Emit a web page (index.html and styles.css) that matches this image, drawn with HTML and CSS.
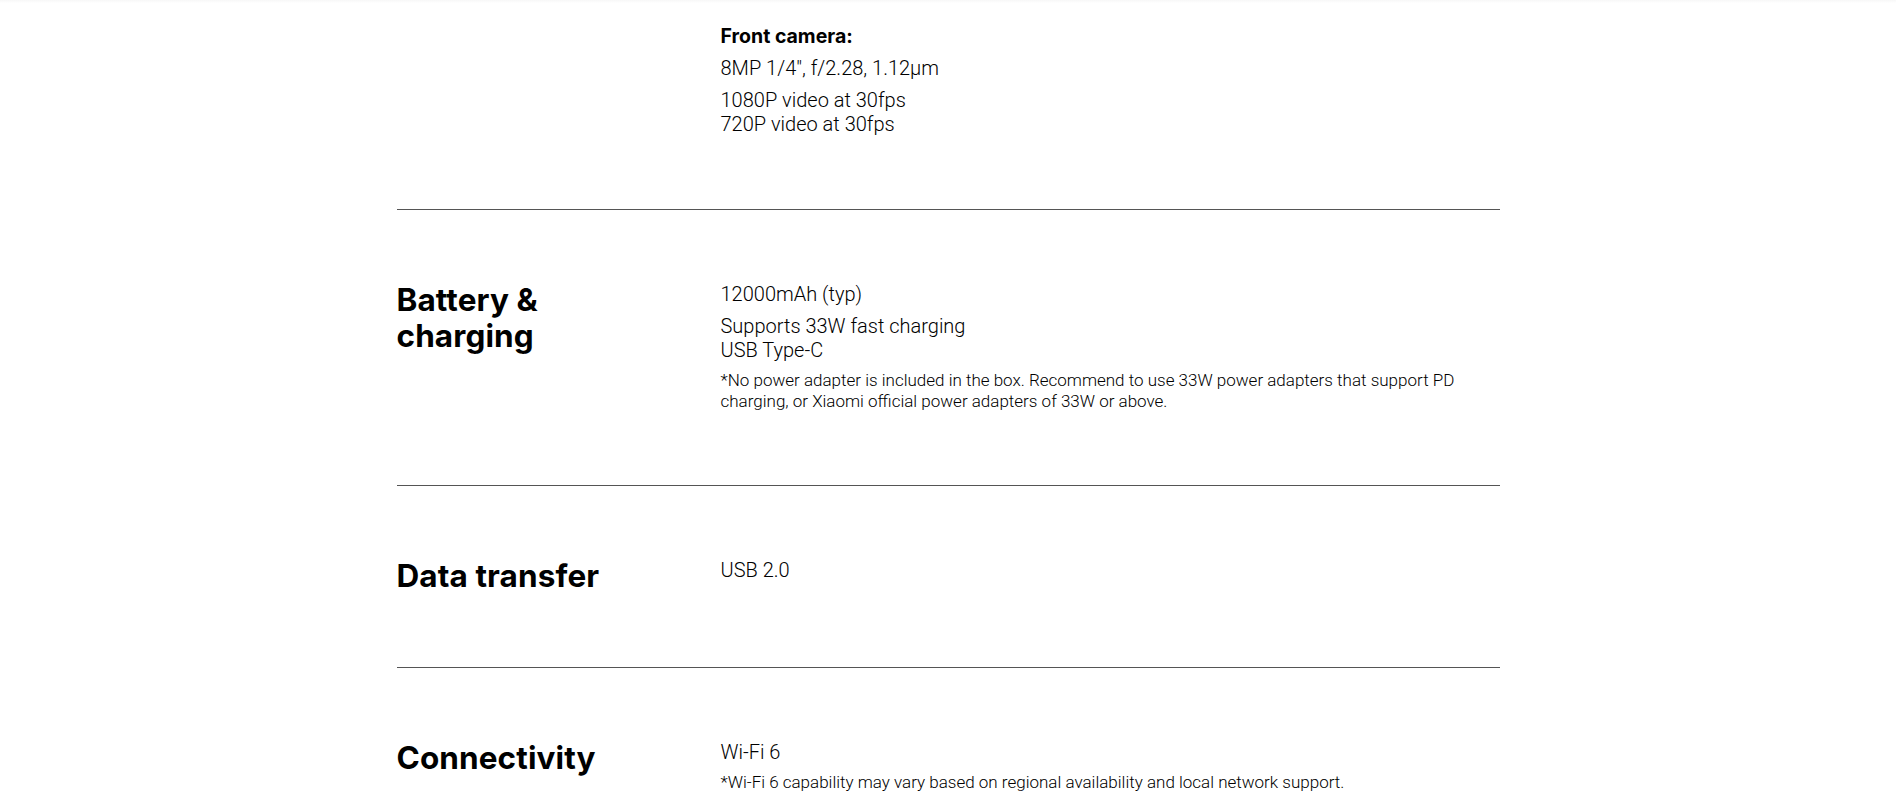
FILE: index.html
```html
<!DOCTYPE html>
<html lang="en">
<head>
<meta charset="utf-8">
<title>Specs</title>
<link rel="stylesheet" href="styles.css">
</head>
<body>
<div class="topfade"></div>
<main class="specs">
  <section class="row row-first">
    <div class="label"></div>
    <div class="values">
      <p class="sub">Front camera:</p>
      <p>8MP 1/4", f/2.28, 1.12μm</p>
      <p>1080P video at 30fps<br>720P video at 30fps</p>
    </div>
  </section>
  <section class="row">
    <h2 class="label">Battery &amp;<br>charging</h2>
    <div class="values">
      <p>12000mAh (typ)</p>
      <p>Supports 33W fast charging<br>USB Type-C</p>
      <p class="note">*No power adapter is included in the box. Recommend to use 33W power adapters that support PD charging, or Xiaomi official power adapters of 33W or above.</p>
    </div>
  </section>
  <section class="row">
    <h2 class="label">Data transfer</h2>
    <div class="values">
      <p>USB 2.0</p>
    </div>
  </section>
  <section class="row">
    <h2 class="label">Connectivity</h2>
    <div class="values">
      <p>Wi-Fi 6</p>
      <p class="note">*Wi-Fi 6 capability may vary based on regional availability and local network support.</p>
    </div>
  </section>
</main>
</body>
</html>
```
FILE: styles.css
```css
html, body {
  margin: 0;
  padding: 0;
  background: #fff;
}
body {
  font-family: Roboto, "Noto Sans", sans-serif;
  color: #000;
  overflow: hidden;
}
.topfade {
  position: fixed;
  top: 0;
  left: 0;
  right: 0;
  height: 3px;
  background: linear-gradient(#f7f7f7, #fff);
}
.specs {
  width: 1103px;
  margin: 0 auto;
}
.row {
  display: grid;
  grid-template-columns: 324px 1fr;
  padding: 72px 0 73px;
  border-top: 1px solid #555;
}
.row-first {
  border-top: none;
  padding-top: 24px;
}
.label {
  margin: 0;
  font-family: Inter, "Noto Sans", sans-serif;
  font-weight: 700;
  font-size: 31.5px;
  line-height: 36px;
  letter-spacing: 0.1px;
}
.values p {
  margin: 0 0 8px;
  font-size: 20px;
  line-height: 24px;
  font-weight: 300;
}
.values p:last-child {
  margin-bottom: 0;
}
.values p.sub {
  font-weight: 700;
  font-family: Inter, "Noto Sans", sans-serif;
  font-size: 19.5px;
}
.values p.note {
  font-size: 17px;
  line-height: 21px;
  margin-top: 8px;
}
```
